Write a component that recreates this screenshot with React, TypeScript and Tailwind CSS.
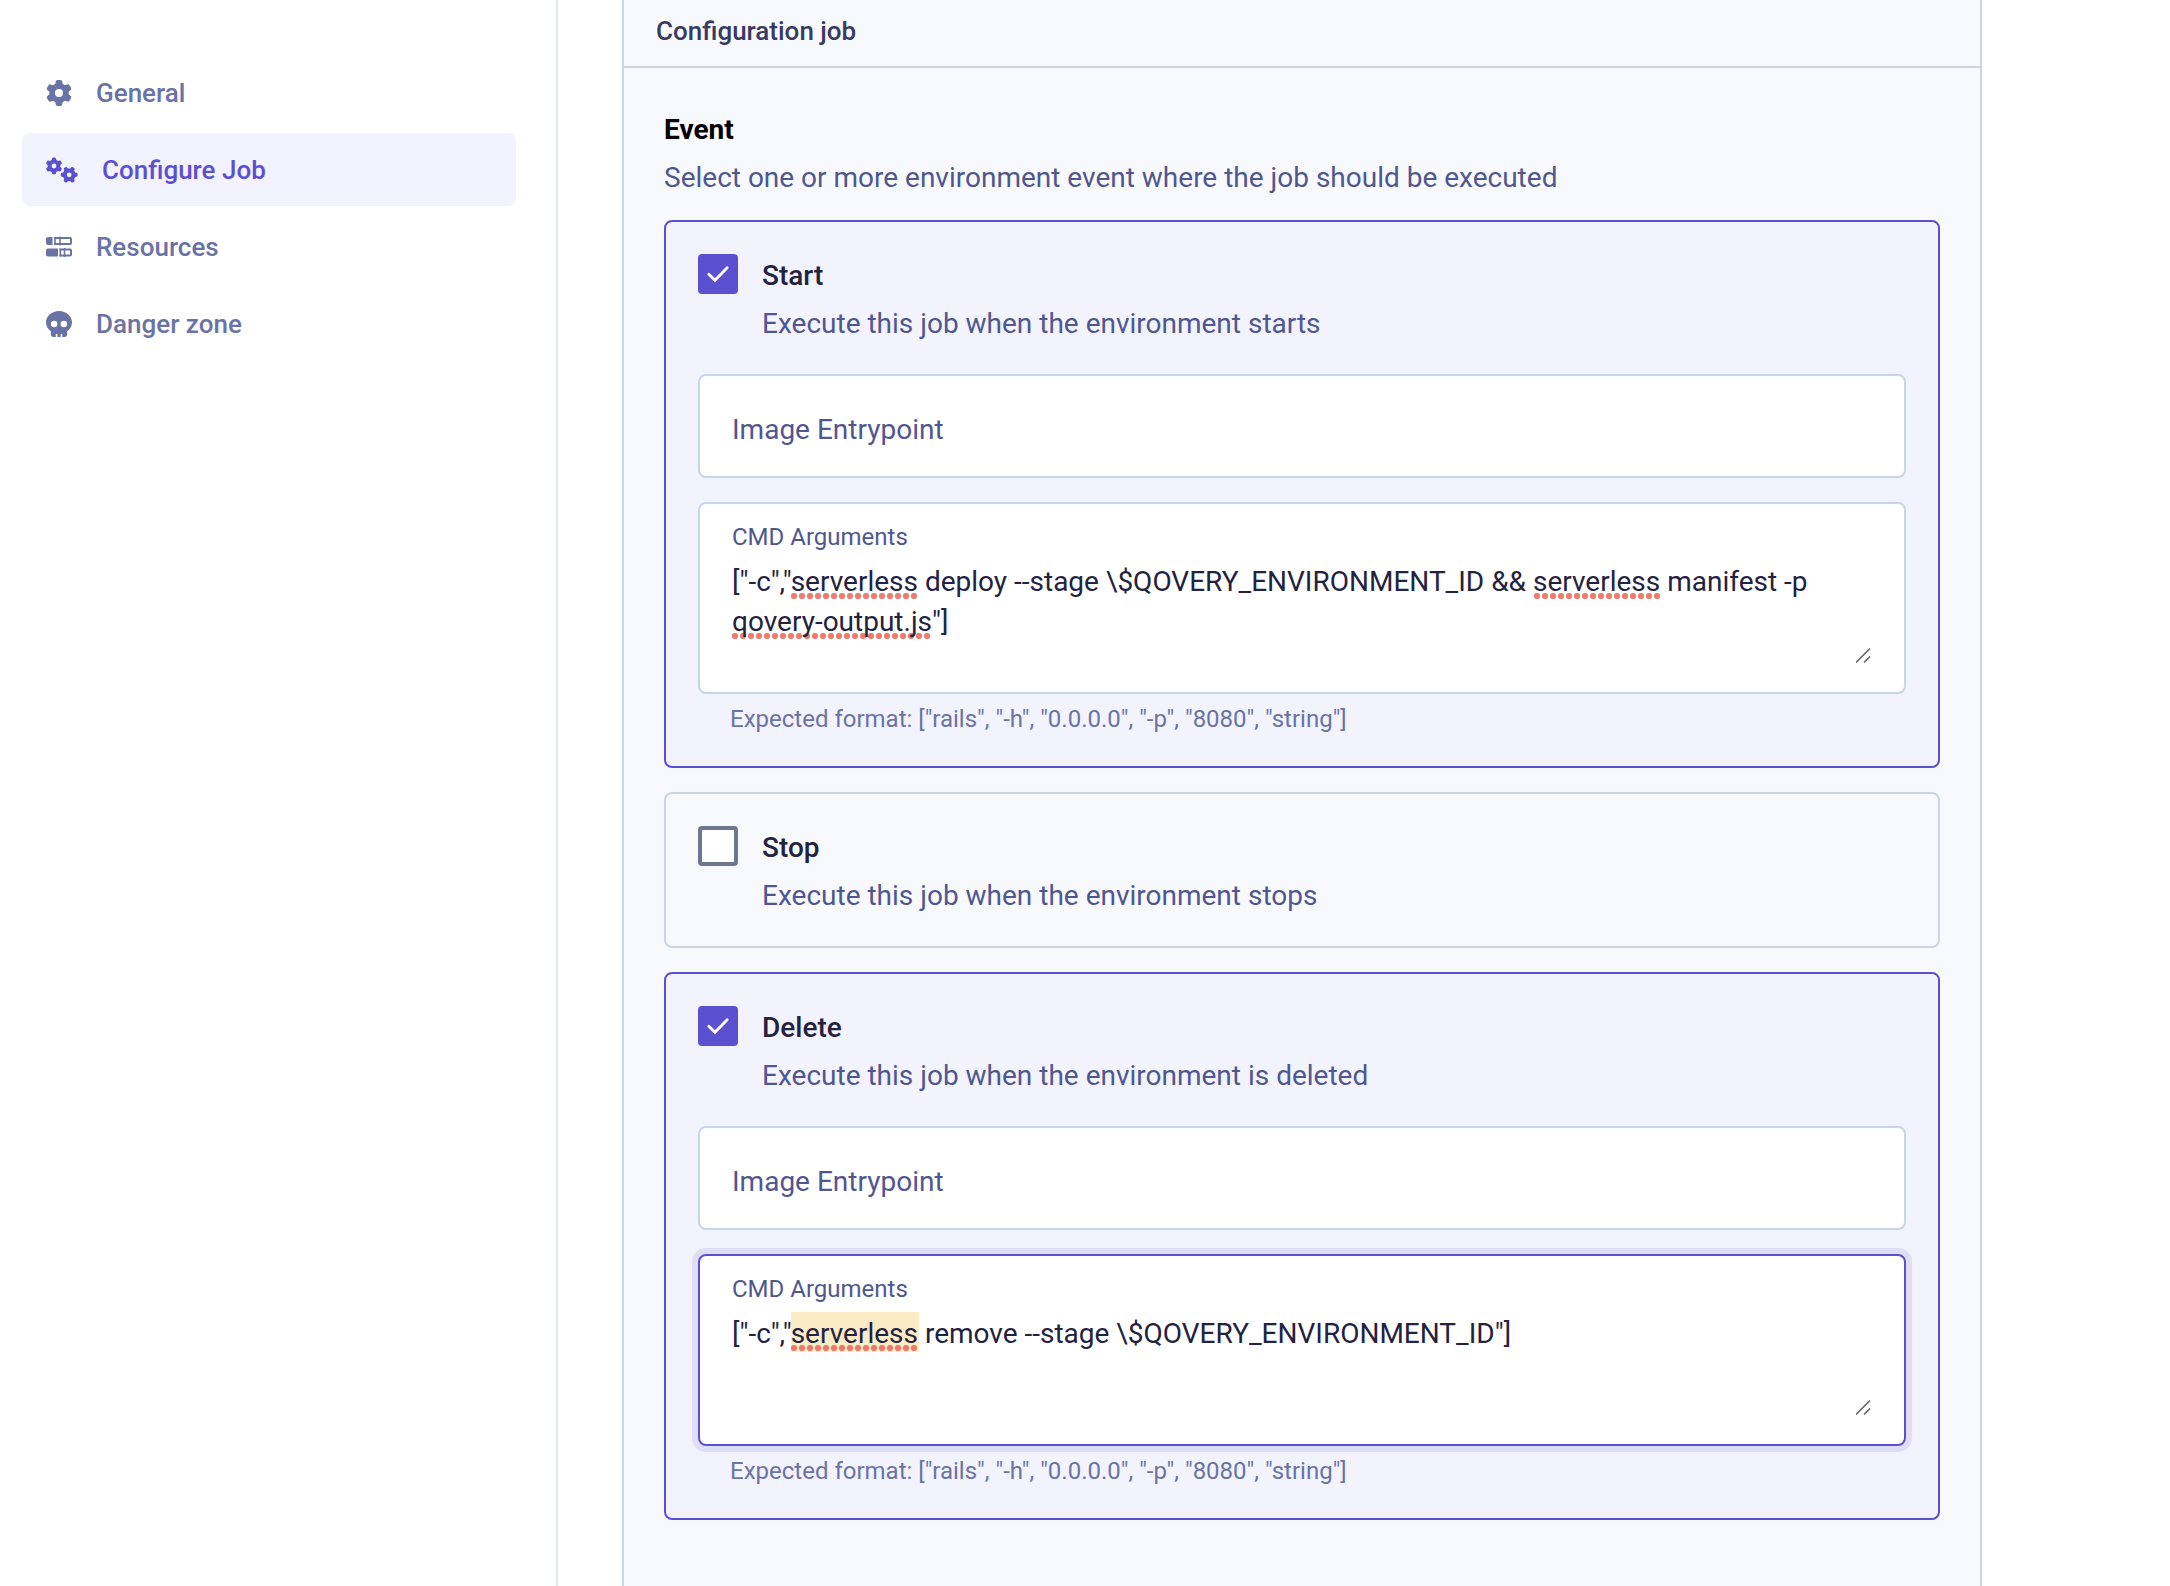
import { useState, type ReactNode } from 'react'
import { FaGear, FaGears, FaSkull } from 'react-icons/fa6'

function ResourcesIcon() {
  return (
    <svg viewBox="0 0 26 22" className="h-[22px] w-[26px]" fill="none" stroke="currentColor" aria-hidden="true">
      <path d="M2 1h4.500v8H2a2 2 0 0 1-2-2V3a2 2 0 0 1 2-2z" fill="currentColor" stroke="none" />
      <path d="M8 2h16a1 1 0 0 1 1 1v4a1 1 0 0 1-1 1H8" strokeWidth="2" />
      <path d="M9 1v8M14 .5v9" strokeWidth="1.600" />
      <path d="M2 12.500h10v8H2a2 2 0 0 1-2-2v-4a2 2 0 0 1 2-2z" fill="currentColor" stroke="none" />
      <path d="M13.500 13.500H24a1 1 0 0 1 1 1v4a1 1 0 0 1-1 1H13.500" strokeWidth="2" />
      <path d="M14.300 12.500v8M18.500 12v9" strokeWidth="1.600" />
    </svg>
  )
}

const links: { label: string; icon: ReactNode; active?: boolean }[] = [
  { label: 'General', icon: <FaGear className="h-[26px] w-[26px]" /> },
  { label: 'Configure Job', icon: <FaGears className="h-[26px] w-8" />, active: true },
  { label: 'Resources', icon: <ResourcesIcon /> },
  { label: 'Danger zone', icon: <FaSkull className="h-[26px] w-[26px]" /> },
]

function Sidebar() {
  return (
    <aside className="w-[558px] shrink-0 border-r-2 border-[#e2e8f3] pr-10 pl-[22px] pt-14">
      <nav className="flex flex-col gap-1">
        {links.map((l) => (
          <a
            key={l.label}
            href="#"
            aria-current={l.active ? 'page' : undefined}
            className={
              l.active
                ? 'flex h-[73px] items-center gap-6 rounded-lg bg-[#f2f3fe] px-6 text-[26px] font-medium text-[#5b50d0]'
                : 'flex h-[73px] items-center gap-6 rounded-lg px-6 text-[26px] font-medium text-[#6a73a5]'
            }
          >
            {l.icon}
            <span className="pt-0.5">{l.label}</span>
          </a>
        ))}
      </nav>
    </aside>
  )
}

const DOTS =
  'pointer-events-none absolute h-[6px] bg-[radial-gradient(circle_at_3px_3px,#f07b6c_2.8px,transparent_3.4px)] bg-[length:8px_6px]'

function TextField({ id, label }: { id: string; label: string }) {
  return (
    <div className="grid h-[104px] rounded-lg border-2 border-[#c8d4e7] bg-white">
      <label
        htmlFor={id}
        className="pointer-events-none z-10 col-start-1 row-start-1 self-center px-8 pt-2 text-[28px] leading-10 text-[#505790]"
      >
        {label}
      </label>
      <input
        id={id}
        className="col-start-1 row-start-1 w-full rounded-lg bg-transparent px-8 pt-6 text-[28px] text-[#23223f] outline-none"
      />
    </div>
  )
}

function TextArea({
  id,
  value,
  focused,
  children,
}: {
  id: string
  value: string
  focused?: boolean
  children: ReactNode
}) {
  const [text, setText] = useState(value)
  return (
    <div>
      <div
        className={
          focused
            ? 'h-48 rounded-lg border-2 border-[#5b50d0] bg-white px-8 pt-4 ring-6 ring-[#e0ddf9]'
            : 'h-48 rounded-lg border-2 border-[#c8d4e7] bg-white px-8 pt-4'
        }
      >
        <label htmlFor={id} className="block text-2xl leading-[34px] text-[#505790]">
          {'CMD Arguments'}
        </label>
        <div className="relative mt-1.5 h-[104px]">
          {children}
          <textarea
            id={id}
            value={text}
            onChange={(e) => setText(e.target.value)}
            spellCheck={false}
            className="relative block h-full w-full resize-none overflow-hidden bg-transparent pt-0.5 text-[28px] leading-10 text-[#23223f] outline-none"
          />
          <svg viewBox="0 0 16 16" className="absolute right-0 bottom-0 h-4 w-4" stroke="#5c5c5c" strokeWidth="1.500" aria-hidden="true">
            <path d="M0 14.500 14 .5M8 14.500 14 8.500" />
          </svg>
        </div>
      </div>
      <p className="mt-2.5 px-8 text-2xl leading-[30px] text-[#6a73a5]">
        {'Expected format: ["rails", "-h", "0.0.0.0", "-p", "8080", "string"]'}
      </p>
    </div>
  )
}

function EventCard({
  id,
  title,
  description,
  checked,
  children,
}: {
  id: string
  title: string
  description: string
  checked?: boolean
  children?: ReactNode
}) {
  return (
    <section
      className={
        checked
          ? 'rounded-lg border-2 border-[#5b50d0] bg-[#f2f3fd] p-8'
          : 'rounded-lg border-2 border-[#c8d4e7] p-8'
      }
    >
      <div className="flex gap-6">
        <span className="grid h-10 w-10 shrink-0">
          <input
            id={id}
            type="checkbox"
            defaultChecked={checked}
            className="peer col-start-1 row-start-1 h-10 w-10 appearance-none rounded border-4 border-[#6b788f] bg-white checked:border-[#5b50d0] checked:bg-[#5b50d0]"
          />
          <svg
            viewBox="0 0 40 40"
            className="pointer-events-none invisible col-start-1 row-start-1 h-10 w-10 peer-checked:visible"
            fill="none"
            stroke="white"
            strokeWidth="2.800"
            strokeLinecap="round"
            aria-hidden="true"
          >
            <path d="M10.800 20.200 17 26.200 29.200 13.800" />
          </svg>
        </span>
        <div className="text-[28px]">
          <label htmlFor={id} className="block leading-11 font-medium text-[#23223f]">
            {title}
          </label>
          <p className="mt-2 leading-9 text-[#505790]">{description}</p>
        </div>
      </div>
      {children && <div className="mt-8 flex flex-col gap-6">{children}</div>}
    </section>
  )
}

export default function App() {
  return (
    <div className="flex min-h-screen bg-white font-[Roboto,sans-serif]">
      <Sidebar />
      <main className="flex min-w-0 flex-1 px-16">
        <div className="w-full max-w-[1360px] border-x-2 border-[#c8d4e7] bg-[#f8f9fd]">
          <h2 className="border-b-2 border-[#c8d4e7] px-8 pt-[11px] pb-[15px] text-[26px] leading-10 font-medium text-[#383a62]">
            Configuration job
          </h2>
          <div className="px-10 pt-10 pb-[66px]">
            <h3 className="text-[28px] leading-11 font-bold text-black">Event</h3>
            <p className="mt-2 mb-6 text-[28px] leading-9 text-[#505790]">
              Select one or more environment event where the job should be executed
            </p>
            <div className="flex flex-col gap-6">
              <EventCard id="start" title="Start" description="Execute this job when the environment starts" checked>
                <TextField id="start-entrypoint" label="Image Entrypoint" />
                <TextArea
                  id="start-cmd"
                  value={'["-c","serverless deploy --stage \\$QOVERY_ENVIRONMENT_ID && serverless manifest -p qovery-output.js"]'}
                >
                  <span className={`${DOTS} top-[33px] left-[59px] w-32`} />
                  <span className={`${DOTS} top-[33px] left-[802px] w-32`} />
                  <span className={`${DOTS} top-[73px] left-0 w-[200px]`} />
                </TextArea>
              </EventCard>
              <EventCard id="stop" title="Stop" description="Execute this job when the environment stops" />
              <EventCard id="delete" title="Delete" description="Execute this job when the environment is deleted" checked>
                <TextField id="delete-entrypoint" label="Image Entrypoint" />
                <TextArea id="delete-cmd" value={'["-c","serverless remove --stage \\$QOVERY_ENVIRONMENT_ID"]'} focused>
                  <span className="absolute top-0 left-[59px] h-10 w-32 bg-[#fbecc5]" />
                  <span className={`${DOTS} top-[33px] left-[59px] w-32`} />
                </TextArea>
              </EventCard>
            </div>
          </div>
        </div>
      </main>
    </div>
  )
}
